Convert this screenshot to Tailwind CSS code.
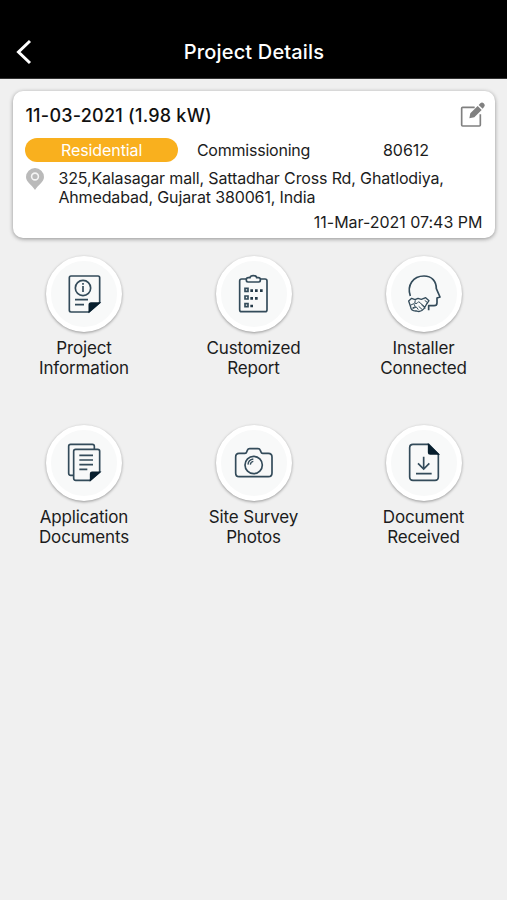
<!DOCTYPE html>
<html lang="en">
<head>
<meta charset="utf-8">
<title>Project Details</title>
<script src="https://cdn.jsdelivr.net/npm/@tailwindcss/browser@4"></script>
</head>
<body class="bg-[#f0f0f0] font-['Inter',sans-serif] text-[#1c1c1c]">
<div class="w-[507px] h-[900px] overflow-hidden flex flex-col">
  <header class="h-[79px] shrink-0 bg-black border-b border-[#333] pt-[26px] px-4 grid grid-cols-[40px_1fr_40px] items-center text-white">
    <svg class="w-4 h-[26px]" viewBox="0 0 16 26" fill="none" stroke="#fff" stroke-width="3"><path d="M14 2 2.5 13 14 24"/></svg>
    <h1 class="pl-px text-center text-[20px] font-medium tracking-[0.15px] whitespace-nowrap">Project Details</h1>
  </header>

  <section class="mt-3 ml-[13px] mr-3 h-[147px] shrink-0 rounded-[10px] bg-white shadow-[0_1px_4px_rgba(0,0,0,0.4)] pl-[12.4px] pr-[9px] pt-[10px] flex flex-col">
    <div class="flex justify-between h-[37px]">
      <h2 class="text-[18px] leading-[29px] font-medium tracking-[0.24px] text-[#111] whitespace-nowrap">11-03-2021 (1.98 kW)</h2>
      <svg class="w-[26px] h-[27px]" viewBox="60 48 78 81" fill="none"><path d="M104 67H68q-3 0-3 3v50q0 3 3 3h50q3 0 3-3V88" stroke="#808080" stroke-width="5"/><path d="m88 100 3-15 22-22 12 12-22 22zM116 60l5-5q5-5 10 0 6 6 1 11l-4 5z" fill="#808080"/></svg>
    </div>
    <div class="flex items-center h-6 text-[16px] whitespace-nowrap">
      <span class="w-[152.5px] h-6 leading-6 rounded-full bg-[#f9b01e] text-white text-center tracking-[-0.1px]">Residential</span>
      <span class="ml-[19px] w-[186px] tracking-[-0.22px]">Commissioning</span>
      <span>80612</span>
    </div>
    <div class="flex mt-[6px]">
      <svg class="w-5 h-[23px] shrink-0" viewBox="0 0 20 23"><path d="M10 22C7 17 1 14 1 9a9 9 0 0 1 18 0c0 5-6 8-9 13z" fill="#bababa"/><circle cx="10" cy="8.5" r="3.4" fill="none" stroke="#f4f4f4" stroke-width="1.6"/></svg>
      <p class="ml-[13px] pt-px text-[16px] leading-[19px] tracking-[-0.14px] whitespace-nowrap"><span>325,Kalasagar mall, Sattadhar Cross Rd, Ghatlodiya,</span><br><span>Ahmedabad, Gujarat 380061, India</span></p>
    </div>
    <p class="text-right mt-[5px] pr-[3.6px] text-[16px] leading-5 tracking-[-0.02px] whitespace-nowrap">11-Mar-2021 07:43 PM</p>
  </section>

  <main class="-ml-px -mr-[2px] grid grid-cols-3 mt-[18px] auto-rows-[169px] text-center text-[17px] leading-5 tracking-[-0.16px]">
    <div class="flex flex-col items-center">
      <div class="w-[76px] h-[76px] rounded-full bg-[#f8f9f9] border-[5px] border-white shadow-[0_1px_3px_rgba(0,0,0,0.38)]">
        <svg class="w-[66px] h-[66px]" viewBox="33 33 198 198" fill="none" stroke="#334b5a" stroke-width="5"><path d="M147 186H93q-5 0-5-5V83q0-5 5-5h81q5 0 5 5v75z"/><path d="M148 184v-20q0-5 5-5h24z" fill="#071e2d" stroke="#071e2d"/><circle cx="129" cy="114" r="23"/><path d="M129 108v18M129 99v5M105 149h39M105 164h27"/></svg>
      </div>
      <p class="mt-[6px]">Project<br>Information</p>
    </div>
    <div class="flex flex-col items-center">
      <div class="w-[76px] h-[76px] rounded-full bg-[#f8f9f9] border-[5px] border-white shadow-[0_1px_3px_rgba(0,0,0,0.38)]">
        <svg class="w-[66px] h-[66px]" viewBox="33 33 198 198" fill="none" stroke="#334b5a" stroke-width="5"><path d="M110 87H95q-6 0-6 6v86q0 6 6 6h70q6 0 6-6V93q0-6-6-6h-15"/><path d="M114 96q-5 0-5-5v-3q0-5 6-5h5q1-6 10-6t10 6h5q6 0 6 5v3q0 5-5 5z"/><path d="M105 115h9v9h-9zM105 138h9v9h-9zM105 161h9v9h-9z"/><path d="M121 122h8M135 122h8M150 122h8M121 145h8M135 145h8M121 168h8" stroke-width="8" stroke="#243a48"/></svg>
      </div>
      <p class="mt-[6px] pr-px">Customized<br>Report</p>
    </div>
    <div class="flex flex-col items-center">
      <div class="w-[76px] h-[76px] rounded-full bg-[#f8f9f9] border-[5px] border-white shadow-[0_1px_3px_rgba(0,0,0,0.38)]">
        <svg class="w-[66px] h-[66px]" viewBox="33 33 198 198" fill="none" stroke="#334b5a" stroke-width="5" stroke-linejoin="round"><path d="M91 138C80 106 99 78 132 78c24 0 37 16 37 38l11 25-9 3v14q0 9-9 9h-16v14"/><g stroke-width="4"><path d="m86 153 9-8 10 4 9-4 10 3 13-5 10 9-7 10-8 14q-10 12-22 7-17 1-18-12z"/><path d="m106 151-2 9q8 3 12-5l19 16M91 166l10-5 5 9-9 4M98 176l11-5 6 8M124 164l12 11M116 169l11 10M134 151l10 8" stroke-width="3"/></g></svg>
      </div>
      <p class="mt-[6px] pr-px">Installer<br>Connected</p>
    </div>
    <div class="flex flex-col items-center">
      <div class="w-[76px] h-[76px] rounded-full bg-[#f8f9f9] border-[5px] border-white shadow-[0_1px_3px_rgba(0,0,0,0.38)]">
        <svg class="w-[66px] h-[66px]" viewBox="33 30 198 198" fill="none" stroke="#334b5a" stroke-width="5"><path d="M101 166H92q-6 0-6-6V79q0-6 6-6h65q6 0 6 6v9"/><path d="M149 181h-42q-6 0-6-6V94q0-6 6-6h66q6 0 6 6v62z"/><path d="M152 180v-19q0-4 4-4h22z" fill="#071e2d" stroke="#071e2d"/><path d="M118 106h41M118 120h41M118 134h41M118 148h24"/></svg>
      </div>
      <p class="mt-[6px]">Application<br>Documents</p>
    </div>
    <div class="flex flex-col items-center">
      <div class="w-[76px] h-[76px] rounded-full bg-[#f8f9f9] border-[5px] border-white shadow-[0_1px_3px_rgba(0,0,0,0.38)]">
        <svg class="w-[66px] h-[66px]" viewBox="33 30 198 198" fill="none" stroke="#334b5a" stroke-width="5"><path d="M87 100h18q4 0 5-4l2-5q2-5 7-5h25q5 0 7 5l2 5q1 4 5 4h17q11 0 11 11v48q0 11-11 11H87q-10 0-10-11v-48q0-11 10-11z"/><circle cx="131" cy="135" r="26"/><path d="M114 134q1-15 16-17M121 134q1-9 9-10" stroke-width="4"/></svg>
      </div>
      <p class="mt-[6px] pr-px">Site Survey<br>Photos</p>
    </div>
    <div class="flex flex-col items-center">
      <div class="w-[76px] h-[76px] rounded-full bg-[#f8f9f9] border-[5px] border-white shadow-[0_1px_3px_rgba(0,0,0,0.38)]">
        <svg class="w-[66px] h-[66px]" viewBox="33 30 198 198" fill="none" stroke="#334b5a" stroke-width="5"><path d="M146 73h-47q-10 0-10 10v88q0 10 10 10h66q10 0 10-10v-68z"/><path d="M146 75v22q0 5 5 5h23z" fill="#071e2d" stroke="#071e2d"/><path d="M131 110v37m-17-17 17 17 17-17M108 161h47"/></svg>
      </div>
      <p class="mt-[6px] pr-px">Document<br>Received</p>
    </div>
  </main>
</div>
</body>
</html>
